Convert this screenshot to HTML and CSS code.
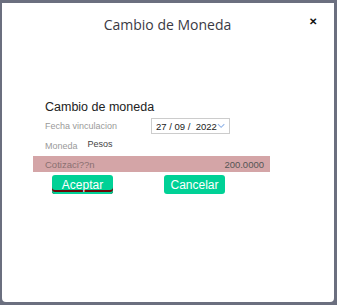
FILE: index.html
```html
<!DOCTYPE html>
<html lang="es">

<head>
  <meta charset="UTF-8" />
  <title>Cambio de Moneda</title>
  <link rel="stylesheet" href="styles.css">
</head>

<body>
  <div class="modal">
    <!-- cabecera del modal -->
    <div class="modal-header">
      <span></span>
      <h4>Cambio de Moneda</h4>
      <button class="close">&#10005;</button>
    </div>

    <div class="modal-body">
      <h5>Cambio de moneda</h5>
      <div class="row">
        <span class="label">Fecha vinculacion</span>
        <div class="date">
          <span>27 / 09 /&nbsp; 2022</span>
          <svg width="9" height="6" viewBox="0 0 9 6"><path d="M1 1 L4.5 4.5 L8 1" fill="none" stroke="#8fb3e8" stroke-width="1.1"/></svg>
        </div>
      </div>
      <div class="row moneda">
        <span class="label">Moneda</span>
        <span class="value">Pesos</span>
      </div>
      <div class="cotizacion">
        <span>Cotizaci??n</span>
        <span class="amount">200.0000</span>
      </div>
      <div class="buttons">
        <button class="btn aceptar">Aceptar</button>
        <button class="btn">Cancelar</button>
      </div>
    </div>
  </div>
</body>

</html>
```

FILE: styles.css
```css
* {
  box-sizing: border-box;
}

body {
  margin: 0;
  background: #6b6f7f;
  font-family: "Liberation Sans", Arial, sans-serif;
}

/* caja blanca del modal */
.modal {
  background: #fff;
  margin: 3px 3px 0 2px;
  height: 299px;
  border-radius: 0 0 4px 4px;
}

.modal-header {
  display: grid;
  grid-template-columns: 1fr auto 1fr;
  align-items: center;
  padding: 12px 17px 0 16px;
}

.modal-header h4 {
  margin: 0;
  font-family: "Open Sans", sans-serif;
  font-weight: 400;
  font-size: 14px;
  color: #3a3a44;
}

.close {
  justify-self: end;
  border: none;
  background: none;
  padding: 0;
  margin-top: -6px;
  font-size: 10px;
  font-weight: bold;
  color: #111;
}

.modal-body {
  padding: 66px 0 0 29px;
}

.modal-body h5 {
  margin: 0 0 4px 14px;
  font-size: 12.5px;
  font-weight: 400;
  color: #222;
}

.row {
  display: flex;
  align-items: center;
  padding-left: 14px;
  font-size: 9px;
}

.label {
  color: #9a9a9a;
}

.date {
  display: flex;
  align-items: center;
  justify-content: space-between;
  width: 79px;
  margin-left: 34px;
  height: 16px;
  padding: 0 4px 0 4px;
  border: 1px solid #ccc;
  color: #222;
  font-size: 9.5px;
  white-space: nowrap;
}

.moneda {
  margin-top: 7px;
}

.moneda .value {
  margin-left: 10px;
  color: #444;
  position: relative;
  top: -2px;
}

.cotizacion {
  display: flex;
  justify-content: space-between;
  width: 237px;
  margin: 5px 0 0 2px;
  padding: 3px 6px 0 12px;
  height: 16px;
  background: #d4a5a7;
  font-size: 9.5px;
  color: #8a7071;
}

.cotizacion .amount {
  color: #555;
}

.buttons {
  display: flex;
  gap: 51px;
  margin: 3px 0 0 21px;
}

.btn {
  width: 61px;
  height: 19px;
  padding: 0;
  border: none;
  border-radius: 3px;
  background: #00d196;
  color: #fff;
  font-family: "Liberation Sans", Arial, sans-serif;
  font-size: 12px;
}

.aceptar {
  box-shadow: inset 0 -2px 0 #00d196, inset 0 -4px 0 #6b0a0a;
}
```
